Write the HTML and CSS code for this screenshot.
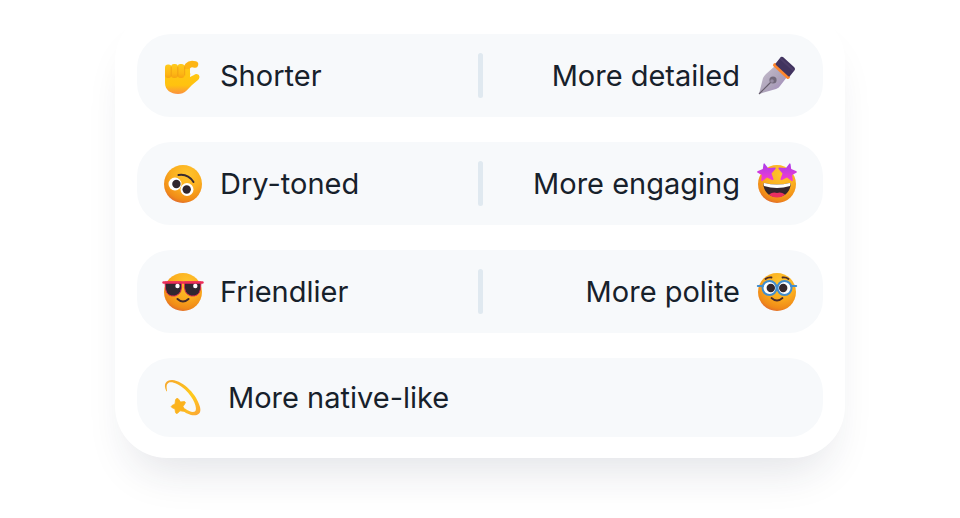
FILE: index.html
```
<!DOCTYPE html>
<html lang="en">

<head>
  <meta charset="UTF-8">
  <meta name="viewport" content="width=device-width, initial-scale=1.0">
  <title>Tone options</title>
  <link rel="stylesheet" href="styles.css">
</head>

<body>
  <main class="card">
    <div class="row">
      <button type="button" class="option">
        <svg class="emoji" viewBox="0 0 40 40" aria-hidden="true">
          <defs>
            <linearGradient id="hand" x1="0" y1="0" x2="0" y2="1">
              <stop offset="0" stop-color="#ffc814"></stop>
              <stop offset="0.65" stop-color="#ffc20f"></stop>
              <stop offset="1" stop-color="#fb9140"></stop>
            </linearGradient>
            <linearGradient id="finger" x1="0" y1="0" x2="0" y2="1">
              <stop offset="0" stop-color="#ffcb1c"></stop>
              <stop offset="0.7" stop-color="#fdb614"></stop>
              <stop offset="1" stop-color="#f7a312"></stop>
            </linearGradient>
          </defs>
          <path d="M24 18C22 10 26 7 32 8.5" fill="none" stroke="#fdb515" stroke-width="6.5" stroke-linecap="round"></path>
          <path d="M2 13V27C2 34 8 38 15 38C22 38 25 33 29 29L35 24C39 20 34 16 31 19L27 21V13Z" fill="url(#hand)"></path>
          <rect x="2" y="8.5" width="6.5" height="13.5" rx="3" fill="url(#finger)"></rect>
          <rect x="8" y="8" width="7" height="14" rx="3" fill="url(#finger)"></rect>
          <rect x="14.500" y="8" width="7" height="14" rx="3" fill="url(#finger)"></rect>
          <path d="M8.200 11V20M14.800 11V20M21.700 11V19" stroke="#ee9a15" stroke-width="0.8" stroke-linecap="round"></path>
        </svg>
        <span>Shorter</span>
      </button>
      <span class="divider"></span>
      <button type="button" class="option option-right">
        <span>More detailed</span>
        <svg class="emoji" viewBox="0 0 40 40" aria-hidden="true">
          <defs>
            <linearGradient id="nib" x1="0" y1="0" x2="1" y2="1">
              <stop offset="0" stop-color="#c9c1d0"></stop>
              <stop offset="0.55" stop-color="#aea4ba"></stop>
              <stop offset="1" stop-color="#a182c2"></stop>
            </linearGradient>
          </defs>
          <path d="M2 38L6 22Q7 20 9 18L18 10L30 21L23 30Q22 32 19 33Z" fill="url(#nib)"></path>
          <path d="M2 38L15 25" stroke="#655c6b" stroke-width="1.2"></path>
          <circle cx="16" cy="24" r="3.6" fill="#71687a"></circle>
          <circle cx="15" cy="25" r="1.8" fill="#968ba2"></circle>
          <path d="M18 9L31 21" stroke="#ff862d" stroke-width="4" stroke-linecap="round"></path>
          <path d="M23 2Q24 0 26 1L37 11Q39 13 37 15L33 20Q32 21 31 20L19 9Q18 8 19 7Z" fill="#41335f"></path>
          <path d="M24 3L36 14" stroke="#4c3d68" stroke-width="2" stroke-linecap="round"></path>
        </svg>
      </button>
    </div>

    <div class="row">
      <button type="button" class="option">
        <svg class="emoji" viewBox="0 0 40 40" aria-hidden="true">
          <defs>
            <radialGradient id="face" cx="0.6" cy="0.25" r="0.8">
              <stop offset="0" stop-color="#ffc52e"></stop>
              <stop offset="0.5" stop-color="#fbae1e"></stop>
              <stop offset="0.85" stop-color="#f08a18"></stop>
              <stop offset="1" stop-color="#dd6532"></stop>
            </radialGradient>
          </defs>
          <circle cx="20" cy="20" r="19" fill="url(#face)"></circle>
          <circle cx="12" cy="20" r="6.5" fill="#fff"></circle>
          <circle cx="24" cy="25.5" r="6.5" fill="#fff"></circle>
          <circle cx="13.4" cy="20" r="4.2" fill="#30262e"></circle>
          <circle cx="23.7" cy="25.5" r="4.2" fill="#30262e"></circle>
          <path d="M15.5 11Q25 9.5 30.5 18" fill="none" stroke="#3a2b2f" stroke-width="2" stroke-linecap="round"></path>
        </svg>
        <span>Dry-toned</span>
      </button>
      <span class="divider"></span>
      <button type="button" class="option option-right">
        <span>More engaging</span>
        <svg class="emoji" viewBox="0 0 40 40" aria-hidden="true">
          <defs>
            <linearGradient id="star" x1="0" y1="0" x2="0" y2="1">
              <stop offset="0" stop-color="#a83bea"></stop>
              <stop offset="1" stop-color="#f93bd0"></stop>
            </linearGradient>
          </defs>
          <circle cx="20" cy="20" r="19" fill="url(#face)"></circle>
          <path d="M7.5 19Q20 22 32.5 19Q34 19 33.5 22C32 29 27 33 20 33S8 29 6.5 22Q6 19 7.5 19Z" fill="#35262d"></path>
          <path d="M7.5 19Q20 22 32.5 19Q34 19 33 22Q20 26 7 22Q6 19 7.5 19Z" fill="#fff"></path>
          <path d="M12 30.5Q16 27.5 20 29Q24 27.5 28 30.5Q25 33.5 20 33.5T12 30.5Z" fill="#ea2f61"></path>
          <path id="star-eye" d="M7.5 -0.5L11 4L18 3.500Q19.500 4 18 5.500L14.500 9.500L16.500 15Q16.500 16.500 15 16L10 13.500L5.500 17Q4 17.500 4.200 16L4.800 11L0.300 8.500Q-0.500 7.500 1 7L5.800 5L6.500 0Q7 -1 7.500 -0.500Z" fill="url(#star)"></path>
          <use href="#star-eye" transform="translate(40 0) scale(-1 1)"></use>
        </svg>
      </button>
    </div>

    <div class="row">
      <button type="button" class="option">
        <svg class="emoji" viewBox="0 0 40 40" aria-hidden="true">
          <circle cx="20" cy="20" r="19" fill="url(#face)"></circle>
          <path d="M2 10H18.500Q20 22 12 24Q4 25 2.500 17Z" fill="#302730" stroke="#d92b50" stroke-width="1"></path>
          <path d="M38 10H21.500Q20 22 28 24Q36 25 37.500 17Z" fill="#302730" stroke="#d92b50" stroke-width="1"></path>
          <path d="M0.500 10.500H39.500" stroke="#ed2d59" stroke-width="2.400" stroke-linecap="round"></path>
          <circle cx="14.500" cy="14" r="2.200" fill="#fff"></circle>
          <circle cx="32.300" cy="14" r="2.200" fill="#fff"></circle>
          <path d="M14.500 27Q20 32 25.500 27" fill="none" stroke="#41292a" stroke-width="2" stroke-linecap="round"></path>
        </svg>
        <span>Friendlier</span>
      </button>
      <span class="divider"></span>
      <button type="button" class="option option-right">
        <span>More polite</span>
        <svg class="emoji" viewBox="0 0 40 40" aria-hidden="true">
          <circle cx="20" cy="20" r="19" fill="url(#face)"></circle>
          <g stroke="#438dcc" stroke-width="2" fill="#fff">
            <circle cx="12.500" cy="16" r="7"></circle>
            <circle cx="27.500" cy="16" r="7"></circle>
            <path d="M0.800 14H6M34 14H39.200" fill="none" stroke-linecap="round"></path>
          </g>
          <circle cx="13.800" cy="16" r="4.200" fill="#35272b"></circle>
          <circle cx="26.200" cy="16" r="4.200" fill="#35272b"></circle>
          <g fill="none" stroke="#4a2b29" stroke-width="1.800" stroke-linecap="round">
            <path d="M8.500 7Q11 5 14.500 5.500"></path>
            <path d="M25.500 5.500Q29 5 31.500 7"></path>
            <path d="M14.500 26Q20 31 25.500 26"></path>
          </g>
        </svg>
      </button>
    </div>

    <div class="row row-short">
      <button type="button" class="option option-wide">
        <svg class="emoji" viewBox="0 0 40 40" aria-hidden="true">
          <defs>
            <linearGradient id="comet" x1="0" y1="0" x2="1" y2="1">
              <stop offset="0" stop-color="#f6a52c"></stop>
              <stop offset="0.6" stop-color="#ffcb1c"></stop>
              <stop offset="1" stop-color="#fba437"></stop>
            </linearGradient>
          </defs>
          <path d="M3.300 13C0 6 3 2 9 2C21 3 34 17 37 29C39 37 33 38 28 37Q23 36 19 32L22 30.500Q28 35 32 33.500C35 31 31 20 22 11.500C15 5 9 3.500 6 4.500C3 6 3.500 9 4 12.500Q4 14 3.300 13Z" fill="url(#comet)"></path>
          <path d="M14 20.500Q15 20 15.800 21.500L17.500 24L21.500 23.500Q23 24 22 25.500L20 28.500L22 32Q22.500 33.500 20.500 33.300L17 32.800L14.500 35.300Q13 36 12.500 34.500L12 31L8.800 29.500Q7.500 28.500 9 27.500L12 26L12.500 22Q13 20.500 14 20.500Z" fill="#fbb31e" stroke="#fbb31e" stroke-width="0.8" stroke-linejoin="round"></path>
        </svg>
        <span>More native-like</span>
      </button>
    </div>
  </main>
</body>

</html>
```
FILE: styles.css
```
* {
  box-sizing: border-box;
}

body {
  font-family: Inter, "Liberation Sans", sans-serif;
  background-color: #fff;
  color: #17212b;
  margin: 0;
  padding: 9px 20px 60px;
}

/* White card that holds all the options */
.card {
  display: flex;
  flex-direction: column;
  gap: 25px;
  max-width: 730px;
  margin: 0 auto;
  padding: 25px 22px 21px;
  background-color: #fff;
  border-radius: 52px;
  box-shadow: 0 28px 44px -16px rgba(30, 35, 70, 0.13);
}

.row {
  display: flex;
  align-items: center;
  min-height: 83px;
  padding: 0 26px;
  background-color: #f7f9fb;
  border-radius: 34px;
}

.row-short {
  min-height: 79px;
}

.option {
  display: flex;
  flex: 1;
  align-items: center;
  gap: 17px;
  padding: 0;
  border: none;
  background: none;
  color: inherit;
  font-family: inherit;
  font-size: 29px;
  line-height: 40px;
  text-align: left;
  cursor: pointer;
}

.option-right {
  justify-content: flex-end;
}

.option-wide {
  gap: 25px;
}

.divider {
  width: 5px;
  height: 45px;
  border-radius: 3px;
  background-color: #e0e9f0;
}

.emoji {
  flex: none;
  width: 40px;
  height: 40px;
  overflow: visible;
}

/* Stack the two halves on narrow screens */
@media screen and (max-width: 600px) {
  .row {
    flex-direction: column;
    align-items: stretch;
    gap: 12px;
    padding: 16px 26px;
  }

  .divider {
    display: none;
  }
}
```
